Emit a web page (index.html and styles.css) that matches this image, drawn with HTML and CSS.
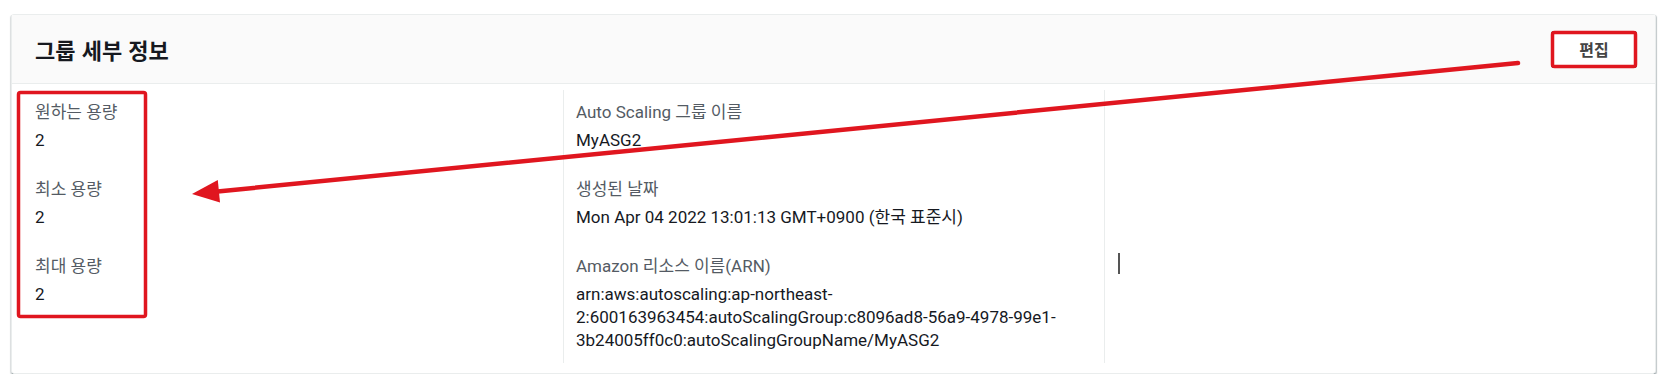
FILE: index.html
```html
<!DOCTYPE html>
<html lang="ko">
<head>
  <meta charset="UTF-8">
  <meta name="viewport" content="width=device-width, initial-scale=1.0">
  <title>그룹 세부 정보</title>
  <link rel="stylesheet" href="styles.css">
</head>
<body>
  <div class="card">
    <div class="card-header">
      <h2>그룹 세부 정보</h2>
      <button type="button" class="btn">편집</button>
    </div>
    <div class="card-body">
      <div class="col">
        <div class="kv">
          <div class="label">원하는 용량</div>
          <div class="value">2</div>
        </div>
        <div class="kv">
          <div class="label">최소 용량</div>
          <div class="value">2</div>
        </div>
        <div class="kv">
          <div class="label">최대 용량</div>
          <div class="value">2</div>
        </div>
      </div>
      <div class="col divided">
        <div class="kv">
          <div class="label">Auto Scaling 그룹 이름</div>
          <div class="value">MyASG2</div>
        </div>
        <div class="kv">
          <div class="label">생성된 날짜</div>
          <div class="value">Mon Apr 04 2022 13:01:13 GMT+0900 (한국 표준시)</div>
        </div>
        <div class="kv">
          <div class="label">Amazon 리소스 이름(ARN)</div>
          <div class="value">arn:aws:autoscaling:ap-northeast-2:600163963454:autoScalingGroup:c8096ad8-56a9-4978-99e1-3b24005ff0c0:autoScalingGroupName/MyASG2</div>
        </div>
      </div>
      <div class="col divided">
        <span class="caret"></span>
      </div>
    </div>
  </div>

  <!-- annotations -->
  <svg class="marks" width="1662" height="378" viewBox="0 0 1662 378">
    <rect x="18.5" y="92.5" width="127" height="224" rx="2" fill="none" stroke="#e0161f" stroke-width="3.5"/>
    <rect x="1552.5" y="32.5" width="83" height="34" rx="2" fill="none" stroke="#e0161f" stroke-width="3.5"/>
    <line x1="1518" y1="63" x2="215" y2="191.7" stroke="#e0161f" stroke-width="4.5" stroke-linecap="round"/>
    <polygon points="192,194 220,202.5 217.8,180" fill="#e0161f"/>
  </svg>
</body>
</html>
```

FILE: styles.css
```css
body {
  margin: 0;
  position: relative;
  background: #fff;
  font-family: Roboto, "Noto Sans CJK KR", sans-serif;
  font-size: 17px;
  color: #16191f;
}
.card {
  margin: 14px 6px 0 11px;
  border: 1px solid #eaeded;
  border-radius: 3px;
  background: #fff;
  box-shadow: 0 2px 1px -1px rgba(0, 28, 36, 0.55), 1px 1px 1px 0 rgba(0, 28, 36, 0.25), -1px 1px 1px 0 rgba(0, 28, 36, 0.15);
}
.card-header {
  display: flex;
  justify-content: space-between;
  align-items: center;
  height: 68px;
  padding: 0 18px 0 23px;
  background: #fafafa;
  border-bottom: 1px solid #eaeded;
}
.card-header h2 {
  margin: 0;
  font-family: "Noto Sans CJK KR", sans-serif;
  font-size: 22px;
  font-weight: 700;
  color: #16191f;
}
.btn {
  width: 86px;
  height: 37px;
  background: #fff;
  border: 1px solid #545b64;
  border-radius: 2px;
  font-family: "Noto Sans CJK KR", sans-serif;
  font-size: 16px;
  font-weight: 700;
  color: #444;
  cursor: pointer;
}
.card-body {
  display: grid;
  grid-template-columns: 528px 541px 1fr;
  padding: 6px 0 10px 23px;
}
.col {
  padding: 11px 12px 11px 0;
}
.col.divided {
  border-left: 1px solid #eaeded;
  padding-left: 12px;
}
.kv + .kv {
  margin-top: 26px;
}
.label {
  line-height: 22px;
  color: #545b64;
  margin-bottom: 6px;
}
.value {
  line-height: 23px;
  color: #16191f;
  overflow-wrap: break-word;
}
.caret {
  display: block;
  width: 2px;
  height: 21px;
  margin-top: 152px;
  margin-left: 1px;
  background: #555;
}
.marks {
  position: absolute;
  top: 0;
  left: 0;
  pointer-events: none;
}
```
